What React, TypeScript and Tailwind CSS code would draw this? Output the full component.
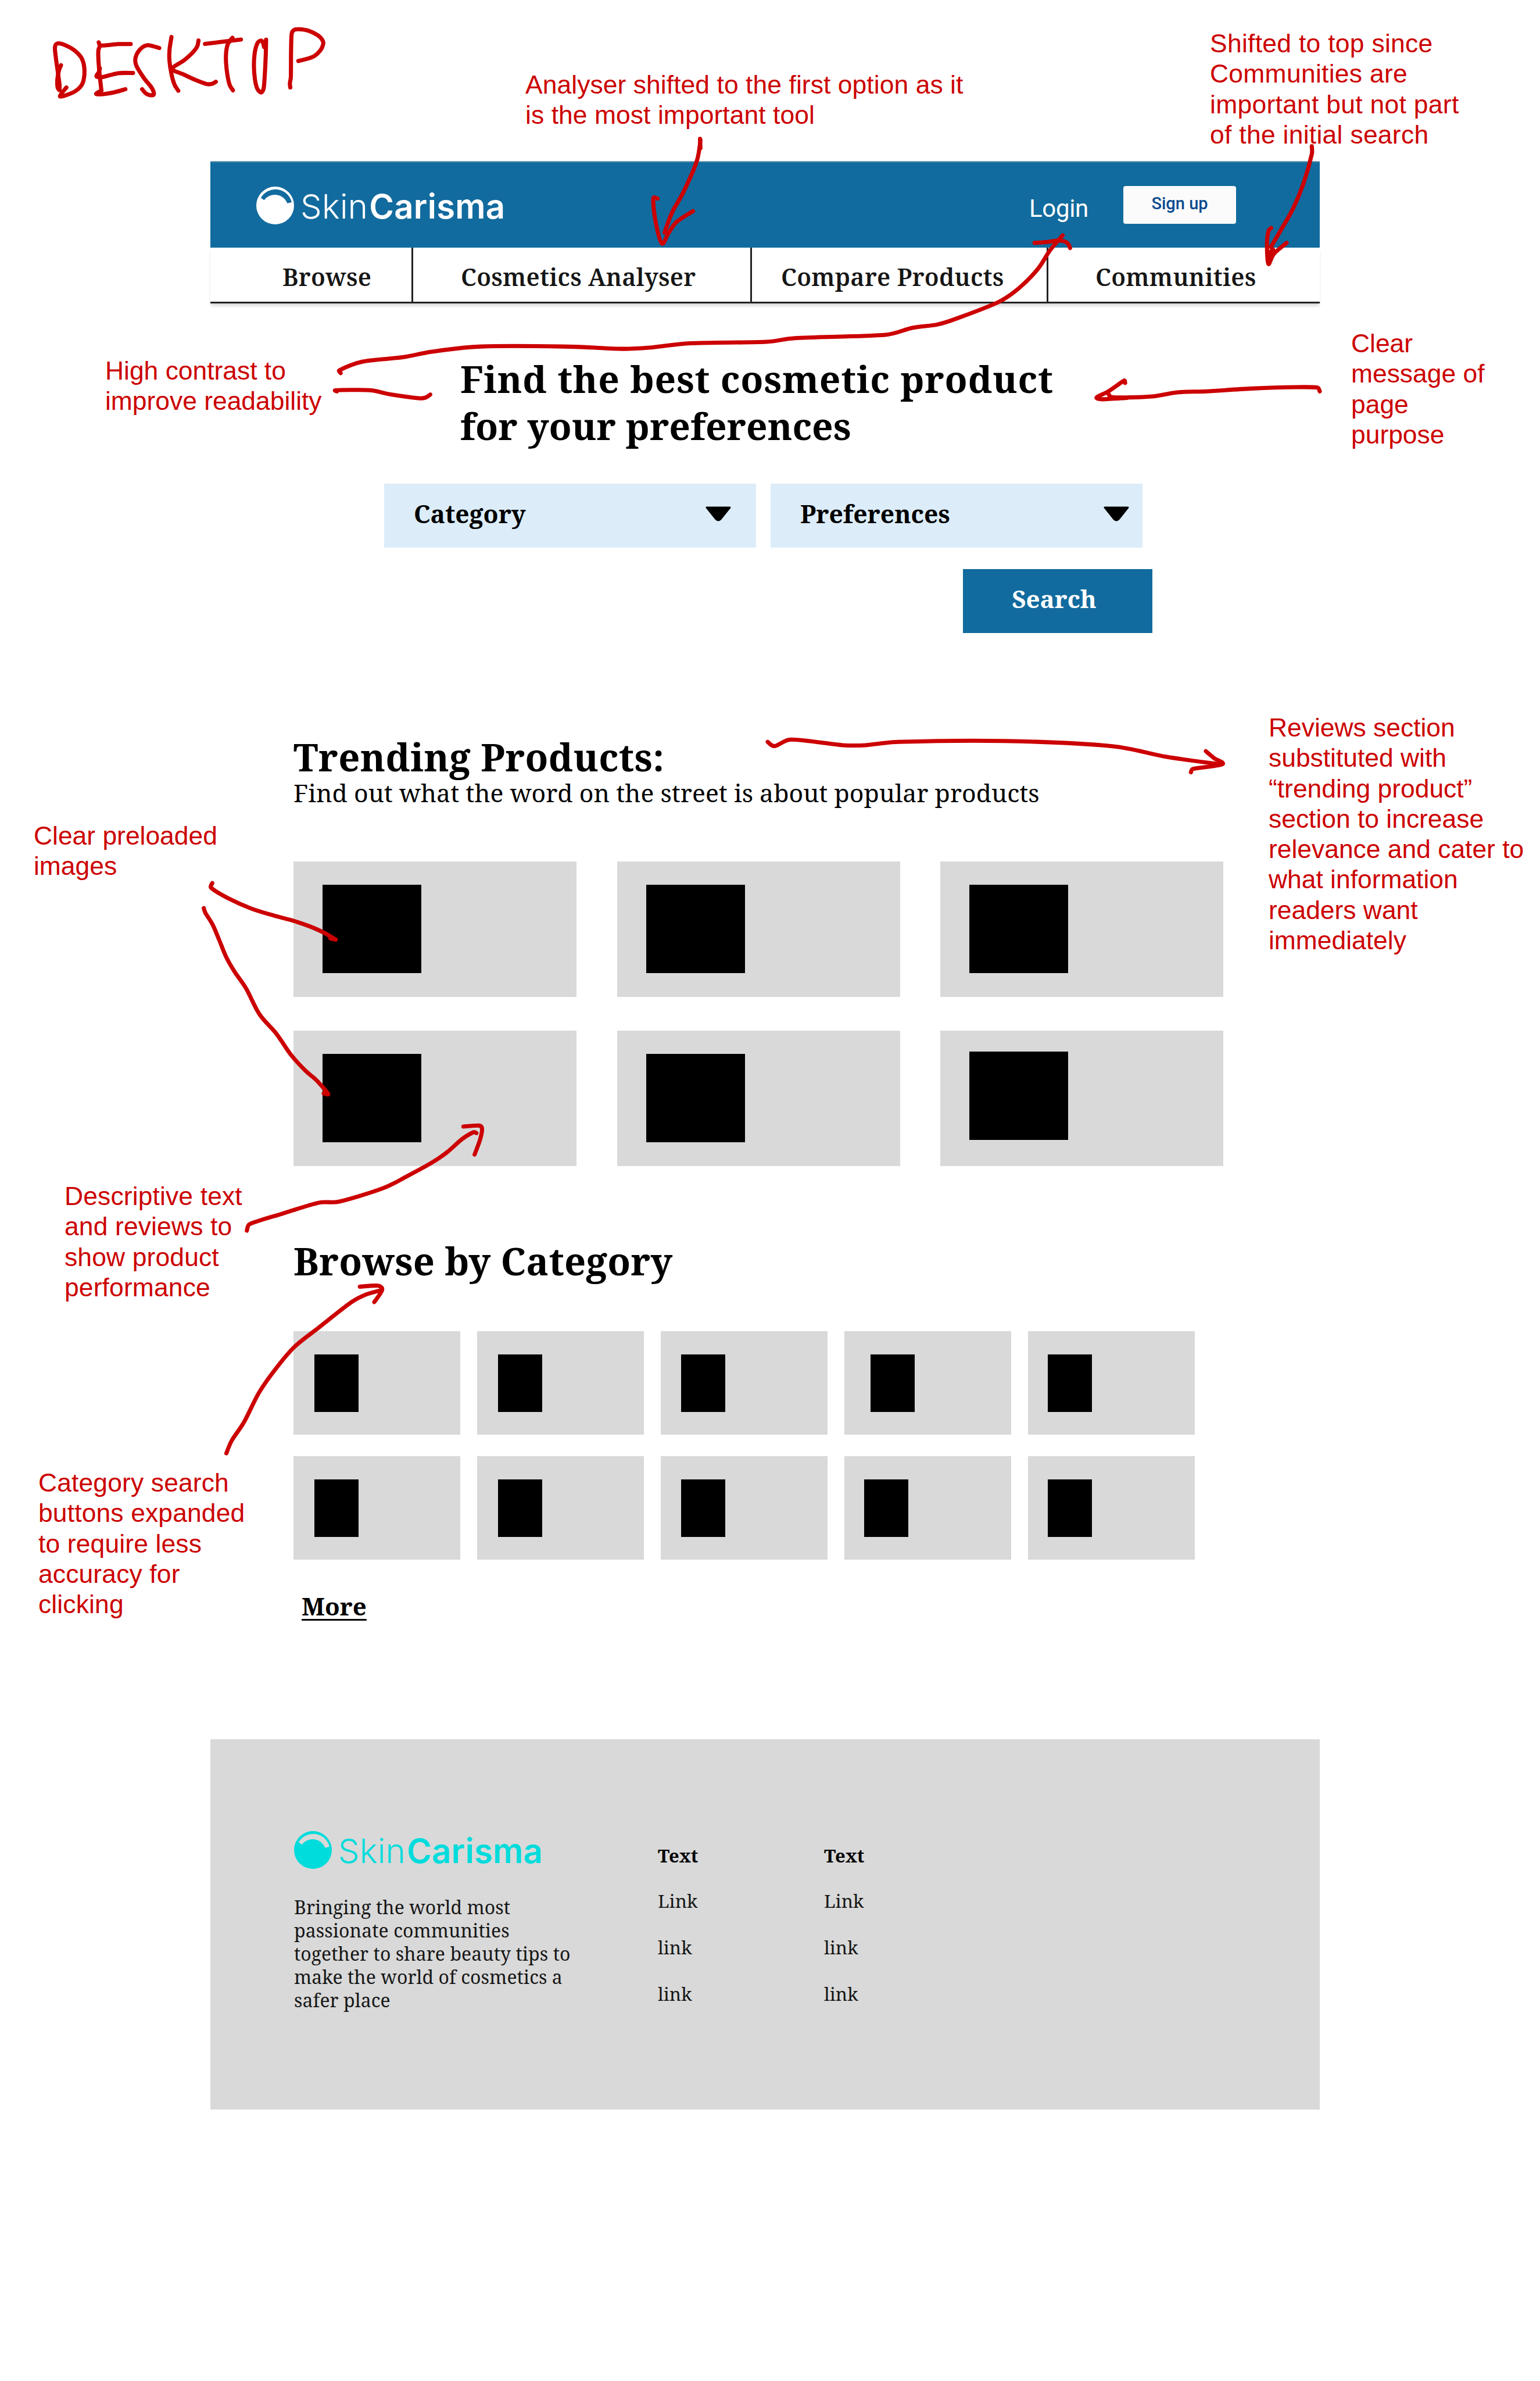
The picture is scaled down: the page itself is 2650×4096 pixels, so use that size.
import type { ReactNode } from "react";

type Point = [number, number];

const place = (x: number, y: number, scale: number, lines: Point[][]): Point[][] =>
  lines.map((line) => line.map(([px, py]): Point => [x + px * scale, y + py * scale]));

// The handwritten title, on its own grid.
const title = place(90, 30, 0.408, [
  // D
  [[100, 268], [90, 292], [84, 320], [80, 350], [82, 385], [90, 398]],
  [[128, 385], [94, 430], [130, 424], [180, 401], [213, 363], [223, 297], [210, 235], [170, 190], [120, 162], [80, 154], [68, 175], [73, 230], [84, 310], [92, 370], [92, 398]],
  // E
  [[298, 148], [306, 163], [340, 163], [400, 157], [466, 157]],
  [[306, 165], [296, 190], [297, 250], [304, 330], [312, 400]],
  [[304, 285], [298, 305], [286, 327], [320, 330], [400, 310], [478, 309]],
  [[312, 400], [284, 419], [320, 420], [380, 410], [438, 394]],
  // S
  [[616, 178], [555, 163], [515, 185], [491, 230], [496, 272], [535, 335], [575, 385], [588, 418], [578, 426], [548, 418], [526, 394]],
  // K
  [[680, 120], [670, 185], [669, 240], [680, 315], [696, 370], [716, 402]],
  [[822, 138], [815, 170], [790, 203], [745, 243], [685, 287], [745, 317], [810, 347], [865, 367], [895, 365], [913, 355]],
  // T
  [[856, 156], [930, 147], [1045, 133]],
  [[1000, 124], [975, 160], [966, 220], [971, 300], [985, 370], [1003, 400]],
  // O
  [[1166, 172], [1160, 148], [1148, 139], [1130, 155], [1117, 205], [1113, 270], [1118, 340], [1130, 390], [1150, 411], [1164, 390], [1170, 320], [1175, 220], [1177, 134]],
  // P
  [[1304, 385], [1302, 362], [1307, 330], [1308, 200], [1311, 105], [1322, 84], [1350, 79], [1400, 87], [1450, 112], [1472, 135], [1477, 157], [1462, 190], [1430, 220], [1390, 235], [1346, 246]],
]);

const imagePointers = place(400, 1800, 0.4464, [
  [[123, 205], [117, 227], [200, 278], [310, 327], [420, 361], [520, 388], [600, 416], [665, 446], [715, 476]],
  [[715, 476], [690, 470]],
  [[82, 325], [90, 348], [125, 405], [155, 475], [190, 560], [230, 630], [285, 710], [350, 835], [430, 927], [500, 1028], [570, 1105], [620, 1148], [660, 1192], [680, 1218], [658, 1214]],
]);

// Arrows on a 3300 x 5100 sheet.
const arrows: Point[][] = [
  // Cosmetics Analyser
  [[1500, 297], [1501, 317]],
  [[1501, 300], [1493, 345], [1465, 410], [1440, 455], [1424, 498]],
  [[1409, 425], [1400, 424], [1404, 470], [1418, 521], [1432, 500], [1450, 475], [1485, 452]],
  // Login
  [[730, 799], [727, 793], [779, 774], [863, 765], [926, 753], [1031, 742], [1207, 742], [1333, 747], [1396, 744], [1480, 735], [1642, 732], [1703, 724], [1897, 717], [1955, 702], [2008, 695], [2050, 682], [2139, 647], [2181, 619], [2223, 577], [2250, 536], [2277, 504]],
  [[2217, 520], [2245, 518], [2270, 515], [2287, 520], [2293, 531]],
  // Heading tick
  [[722, 838], [718, 836], [752, 835], [796, 836], [839, 845], [900, 853], [913, 851], [922, 845]],
  // Communities
  [[2811, 313], [2811, 330], [2793, 393], [2771, 446], [2745, 492], [2723, 529]],
  [[2724, 488], [2718, 495], [2715, 524], [2718, 565], [2730, 543], [2757, 520]],
  [[2718, 562], [2720, 543], [2728, 534]],
  // Page purpose
  [[2828, 838], [2823, 830], [2779, 829], [2682, 832], [2585, 838], [2526, 840], [2468, 849], [2420, 851], [2381, 850], [2374, 841]],
  [[2411, 820], [2409, 815], [2375, 838], [2350, 851], [2362, 855], [2415, 852]],
  // Trending Products
  [[1645, 1589], [1660, 1598], [1695, 1584], [1806, 1596], [1855, 1596], [1925, 1589], [2153, 1587], [2381, 1598], [2500, 1621], [2614, 1637]],
  [[2584, 1609], [2602, 1624], [2619, 1637], [2556, 1647], [2552, 1654]],
  // Descriptive text
  [[529, 2636], [535, 2622], [607, 2599], [684, 2576], [726, 2574], [821, 2545], [873, 2519], [926, 2490], [958, 2468], [990, 2440], [1015, 2425], [1021, 2427]],
  [[993, 2413], [1027, 2411], [1033, 2418], [1029, 2440], [1017, 2473]],
  // Browse by Category
  [[485, 3113], [497, 3085], [523, 3046], [555, 2983], [590, 2933], [631, 2885], [684, 2843], [752, 2790], [784, 2773], [815, 2764]],
  [[771, 2756], [810, 2754], [819, 2763], [802, 2789]],
];

// Catmull-Rom curve through the points.
function smooth(points: Point[]): string {
  let d = `M${points[0][0]} ${points[0][1]}`;
  for (let i = 0; i < points.length - 1; i++) {
    const p0 = points[Math.max(i - 1, 0)];
    const p1 = points[i];
    const p2 = points[i + 1];
    const p3 = points[Math.min(i + 2, points.length - 1)];
    const reach = Math.hypot(p2[0] - p1[0], p2[1] - p1[1]);
    const handle = (a: Point, b: Point): Point => {
      const dx = (b[0] - a[0]) / 6;
      const dy = (b[1] - a[1]) / 6;
      const k = Math.min(1, reach / 2.5 / (Math.hypot(dx, dy) || 1));
      return [dx * k, dy * k];
    };
    const h1 = handle(p0, p2);
    const h2 = handle(p1, p3);
    d += `C${p1[0] + h1[0]} ${p1[1] + h1[1]} ${p2[0] - h2[0]} ${p2[1] - h2[1]} ${p2[0]} ${p2[1]}`;
  }
  return d;
}

function PenStrokes() {
  return (
    <svg
      className="pointer-events-none absolute inset-0 h-full w-full"
      viewBox="0 0 3300 5100"
      fill="none"
      stroke="#cc0000"
      strokeWidth="8.8"
      strokeLinecap="round"
      strokeLinejoin="round"
    >
      {[...title, ...imagePointers, ...arrows].map((points, i) => (
        <path key={i} d={smooth(points)} />
      ))}
    </svg>
  );
}

function Note({ className, lines }: { className: string; lines: string[] }) {
  return (
    <p
      className={`absolute font-['Liberation_Sans',Arial,sans-serif] text-[44.4px] leading-[52.3px] whitespace-nowrap text-[#cc0000] ${className}`}
    >
      {lines.map((line) => (
        <span key={line} className="block">
          {line}
        </span>
      ))}
    </p>
  );
}

function Logo({ gap, className }: { gap: string; className: string }) {
  return (
    <div className={`flex items-center font-['Inter',sans-serif] ${className}`}>
      <svg className="size-[65px]" viewBox="252 158 188 188">
        <circle cx="346" cy="252" r="94" fill="currentColor" />
        <path d="M275 214A83 83 0 0 1 428 236L407 241A67 67 0 0 0 291 225Z" fill={gap} />
      </svg>
      <span className="mt-[2px] ml-[11px] text-[58px] leading-[64px] tracking-[0.3px]">
        <span className="font-[350]">Skin</span>
        <span className="ml-[2px] font-semibold">Carisma</span>
      </span>
    </div>
  );
}

function NavItem({ className, children }: { className: string; children: ReactNode }) {
  return (
    <a
      className={`flex items-center pt-[7px] text-[41.5px] font-semibold tracking-[0.25px] text-[#161616] ${className}`}
    >
      {children}
    </a>
  );
}

function Dropdown({ label, className }: { label: string; className: string }) {
  return (
    <div className={`flex h-[110px] w-[640px] items-center justify-between bg-[#dcedf9] pl-[51px] ${className}`}>
      <span className="-mt-[8px] text-[42.6px] leading-[56px] font-bold">{label}</span>
      <svg className="-mt-[6px] h-[26px] w-[46px]" viewBox="0 0 46 26">
        <path d="M3 2H43L27 22Q23 26 19 22Z" stroke="#000" strokeWidth="3" strokeLinejoin="round" />
      </svg>
    </div>
  );
}

const productCards = ["pt-[40px]", "pt-[40px]", "pt-[40px]", "pt-[40px]", "pt-[40px]", "pt-[36px]"];

const categoryCards = [
  "pl-[36px]", "pl-[36px]", "pl-[35px]", "pl-[45px]", "pl-[34px]",
  "pl-[36px]", "pl-[36px]", "pl-[35px]", "pl-[34px]", "pl-[34px]",
];

function FooterColumn({ className }: { className: string }) {
  return (
    <div className={`flex flex-col gap-[40px] text-[31.5px] leading-[40px] ${className}`}>
      <span className="text-[31px] font-bold text-black">Text</span>
      <a className="-mt-[2px]">Link</a>
      <a>link</a>
      <a>link</a>
    </div>
  );
}

export default function App() {
  return (
    <div className="relative h-[4096px] w-[2650px] overflow-hidden bg-white font-['Noto_Serif','Liberation_Serif',serif] text-black">
      <main className="ml-[362px] flex w-[1909px] flex-col pt-[277px]">
        <header className="flex h-[149px] border-t-2 border-[#6f9ab4] bg-[#126b9e] text-white">
          <Logo gap="#126b9e" className="mt-[42px] ml-[79px] h-[65px]" />
          <div className="mr-[144px] ml-auto flex items-start font-['Roboto',sans-serif] font-medium">
            <span className="mt-[54px] mr-[60px] text-[42px] leading-[52px] font-normal tracking-[-0.3px]">Login</span>
            <button className="mt-[41px] flex h-[65px] w-[194px] justify-center rounded-[4px] bg-[#fbfbfb] pt-[13px] text-[29px] leading-[34px] text-[#0b4a8f]">
              Sign up
            </button>
          </div>
        </header>
        <nav className="flex h-[96px] border-b-3 border-[#222] shadow-[0_5px_5px_-1px_rgba(0,0,0,0.16)]">
          <NavItem className="w-[349px] border-r-3 border-[#222] pl-[124px]">Browse</NavItem>
          <NavItem className="w-[583px] border-r-3 border-[#222] pl-[82px]">Cosmetics Analyser</NavItem>
          <NavItem className="w-[510px] border-r-3 border-[#222] pl-[50px]">Compare Products</NavItem>
          <NavItem className="pl-[81px]">Communities</NavItem>
        </nav>

        <h1 className="mt-[89px] ml-[430px] text-[64px] leading-[81px] font-bold">
          <span className="tracking-[0.8px]">Find the best cosmetic product</span>
          <br />
          for your preferences
        </h1>
        <div className="mt-[59px] ml-[299px] flex gap-[25px]">
          <Dropdown label="Category" className="pr-[42px]" />
          <Dropdown label="Preferences" className="pr-[22px]" />
        </div>
        <button className="mt-[37px] ml-[1295px] h-[110px] w-[326px] bg-[#126b9e] pr-[12px] pb-[9px] text-[42px] font-bold text-white">
          Search
        </button>

        <section className="ml-[143px]">
          <h2 className="mt-[179px] text-[65px] leading-[68px] font-bold tracking-[0.4px]">Trending Products:</h2>
          <p className="text-[42.8px] leading-[56px]">Find out what the word on the street is about popular products</p>
          <div className="mt-[90px] grid w-[1600px] grid-cols-[487px_487px_487px] gap-x-[69.5px] gap-y-[58px]">
            {productCards.map((pad, i) => (
              <div key={i} className={`h-[233px] bg-[#d9d9d9] pl-[50px] ${pad}`}>
                <div className="h-[152px] w-[170px] bg-black" />
              </div>
            ))}
          </div>
        </section>

        <section className="ml-[143px]">
          <h2 className="mt-[129px] text-[65px] leading-[68px] font-bold tracking-[0.25px]">Browse by Category</h2>
          <div className="mt-[87px] grid w-[1560px] grid-cols-[286.5px_286.5px_286.5px_286.5px_286.5px] gap-x-[29.5px] gap-y-[37px]">
            {categoryCards.map((pad, i) => (
              <div key={i} className={`h-[178px] bg-[#d9d9d9] pt-[40px] ${pad}`}>
                <div className="h-[99px] w-[76px] bg-black" />
              </div>
            ))}
          </div>
          <a className="mt-[52px] ml-[14px] block w-fit text-[42px] leading-[56px] font-bold underline decoration-[3px] underline-offset-[6px]">
            More
          </a>
        </section>

        <footer className="mt-[201px] flex h-[637px] bg-[#d9d9d9] pl-[144px] text-[#161616]">
          <div className="w-[626px] pt-[158px]">
            <Logo gap="#d9d9d9" className="h-[65px] text-[#00dcdc]" />
            <p className="mt-[46px] w-[500px] text-[32px] leading-[40.1px] tracking-[0.05px]">
              Bringing the world most
              <br />
              passionate communities
              <br />
              together to share beauty tips to
              <br />
              make the world of cosmetics a
              <br />
              safer place
            </p>
          </div>
          <FooterColumn className="w-[286px] pt-[180px]" />
          <FooterColumn className="pt-[180px]" />
        </footer>
      </main>

      <Note
        className="top-[120px] left-[904px] tracking-[0.08px]"
        lines={["Analyser shifted to the first option as it", "is the most important tool"]}
      />
      <Note
        className="top-[49px] left-[2082px] tracking-[0.3px]"
        lines={["Shifted to top since", "Communities are", "important but not part", "of the initial search"]}
      />
      <Note className="top-[612px] left-[181px]" lines={["High contrast to", "improve readability"]} />
      <Note className="top-[565px] left-[2325px]" lines={["Clear", "message of", "page", "purpose"]} />
      <Note
        className="top-[1226px] left-[2183px]"
        lines={[
          "Reviews section",
          "substituted with",
          "“trending product”",
          "section to increase",
          "relevance and cater to",
          "what information",
          "readers want",
          "immediately",
        ]}
      />
      <Note className="top-[1412px] left-[58px]" lines={["Clear preloaded", "images"]} />
      <Note
        className="top-[2032px] left-[111px] tracking-[0.15px]"
        lines={["Descriptive text", "and reviews to", "show product", "performance"]}
      />
      <Note
        className="top-[2525px] left-[66px] tracking-[0.15px]"
        lines={["Category search", "buttons expanded", "to require less", "accuracy for", "clicking"]}
      />
      <PenStrokes />
    </div>
  );
}
